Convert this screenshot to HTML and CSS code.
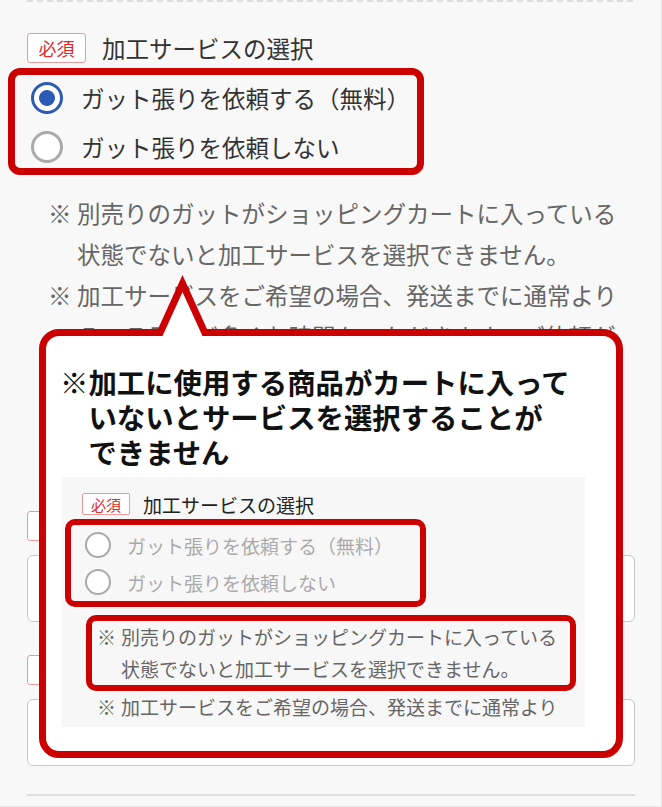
FILE: index.html
```html
<!DOCTYPE html>
<html lang="ja">
<head>
    <meta charset="UTF-8">
    <meta name="viewport" content="width=device-width, initial-scale=1.0">
    <title>加工サービスの選択</title>
    <link rel="stylesheet" href="styles.css">
</head>
<body>
    <div class="screen">
        <div class="divider"></div>

        <section class="field field-service">
            <div class="field-head">
                <span class="badge">必須</span>
                <span class="field-label">加工サービスの選択</span>
            </div>
            <div class="mark-box radios">
                <label class="radio"><span class="dot checked"></span>ガット張りを依頼する（無料）</label>
                <label class="radio"><span class="dot"></span>ガット張りを依頼しない</label>
            </div>
            <ul class="notes">
                <li><span class="kome">※</span><span>別売りのガットがショッピングカートに入っている状態でないと加工サービスを選択できません。</span></li>
                <li><span class="kome">※</span><span>加工サービスをご希望の場合、発送までに通常より５〜７日ほど多くお時間をいただきます。ご依頼が集中した場合は、さらにお時間をいただくことがございます。</span></li>
            </ul>
        </section>

        <section class="field field-input">
            <div class="field-head">
                <span class="badge">必須</span>
                <span class="field-label">ガットの種類</span>
            </div>
            <div class="input-box"></div>
        </section>

        <section class="field field-input field-last">
            <div class="field-head">
                <span class="badge">必須</span>
                <span class="field-label">テンション</span>
            </div>
            <div class="input-box"></div>
        </section>

        <div class="rule"></div>

        <!-- 説明用の吹き出し -->
        <div class="callout">
            <svg class="callout-tail" width="90" height="77" viewBox="0 0 90 77">
                <defs>
                    <clipPath id="tail-clip"><rect x="0" y="0" width="90" height="68"></rect></clipPath>
                </defs>
                <polygon points="18.7,68 42.5,15.5 66.3,68" fill="#fff"></polygon>
                <polyline points="15.5,75 42.5,15.5 69.5,75" fill="none" stroke="#cc0000" stroke-width="7" stroke-linejoin="miter" clip-path="url(#tail-clip)"></polyline>
            </svg>
            <p class="callout-title">※加工に使用する商品がカートに入って<br>いないとサービスを選択することが<br>できません</p>

            <div class="shot">
                <div class="field-head">
                    <span class="badge">必須</span>
                    <span class="field-label">加工サービスの選択</span>
                </div>
                <div class="mark-box radios">
                    <label class="radio"><span class="dot"></span>ガット張りを依頼する（無料）</label>
                    <label class="radio"><span class="dot"></span>ガット張りを依頼しない</label>
                </div>
                <ul class="notes">
                    <li class="mark-box"><span class="kome">※</span><span>別売りのガットがショッピングカートに入っている状態でないと加工サービスを選択できません。</span></li>
                    <li><span class="kome">※</span><span>加工サービスをご希望の場合、発送までに通常より５〜７日ほど多くお時間をいただきます。</span></li>
                </ul>
            </div>
        </div>
    </div>
</body>
</html>
```

FILE: styles.css
```css
body {
    margin: 0;
    background-color: #f8f8f8;
    font-family: "Noto Sans CJK JP", "Noto Sans", sans-serif;
    color: #333;
}
.screen {
    position: relative;
    width: 662px;
    height: 807px;
    box-sizing: border-box;
    padding: 0 26px 0 27px;
    border-right: 1px solid #e6e6e6;
    border-bottom: 1px solid #e6e6e6;
    overflow: hidden;
}
.divider {
    height: 2px;
    background: repeating-linear-gradient(90deg, #dcdcdc 0 6px, transparent 6px 10px);
}

/* フォーム */
.field-service {
    margin-top: 31px;
}
.field-head {
    display: flex;
    align-items: center;
    gap: 16px;
    height: 30px;
}
.badge {
    display: flex;
    align-items: center;
    justify-content: center;
    width: 59px;
    height: 30px;
    box-sizing: border-box;
    border: 1px solid #e79a9a;
    border-radius: 3px;
    background-color: #fff;
    color: #e02a2a;
    font-size: 18px;
}
.field-label {
    font-size: 23.5px;
    color: #333;
}
.mark-box {
    border: 7px solid #cc0000;
    border-radius: 12px;
}
.radios {
    display: flex;
    flex-direction: column;
    gap: 7px;
    width: 416px;
    box-sizing: border-box;
    margin: 5px 0 0 -19px;
    padding: 2px 0 0 16px;
}
.radio {
    display: flex;
    align-items: center;
    gap: 18px;
    height: 42px;
    font-size: 23.5px;
    color: #333;
}
.dot {
    flex: none;
    width: 32px;
    height: 32px;
    box-sizing: border-box;
    border: 3px solid #aaa;
    border-radius: 50%;
    background-color: #fff;
}
.dot.checked {
    border-color: #2b5bb6;
    background: radial-gradient(circle, #2b5bb6 0 7.5px, #fff 8.3px);
}
.notes {
    list-style: none;
    margin: 17.5px 0 0 21px;
    padding: 0;
}
.notes li {
    display: flex;
    font-size: 23.5px;
    line-height: 41px;
    color: #666;
}
.kome {
    flex: none;
    width: 29px;
}
.field-input {
    margin-top: 72px;
}
.field-last {
    margin-top: 33px;
}
.input-box {
    height: 67px;
    margin-top: 14px;
    box-sizing: border-box;
    border: 1px solid #c8c8c8;
    border-radius: 6px;
    background-color: #fff;
}
.rule {
    height: 2px;
    margin-top: 28px;
    background-color: #e0e0e0;
}

/* 吹き出し */
.callout {
    position: absolute;
    left: 39px;
    top: 329px;
    width: 584px;
    height: 429px;
    box-sizing: border-box;
    padding: 28px 0 0 15px;
    border: 7px solid #cc0000;
    border-radius: 20px;
    background-color: #fff;
}
.callout-tail {
    position: absolute;
    left: 94px;
    top: -68px;
}
.callout-title {
    margin: 0 0 0 -1px;
    padding-left: 28.4px;
    text-indent: -28.4px;
    font-size: 28.4px;
    font-weight: bold;
    line-height: 35px;
    color: #111;
}
.shot {
    width: 524px;
    height: 250px;
    margin-top: 8px;
    box-sizing: border-box;
    padding: 16px 0 0 21px;
    background-color: #f7f7f7;
    overflow: hidden;
}
.shot .field-head {
    gap: 13px;
    height: 22px;
}
.shot .badge {
    width: 48px;
    height: 22px;
    border-radius: 2px;
    font-size: 15px;
}
.shot .field-label {
    font-size: 19px;
    color: #222;
}
.shot .mark-box {
    border-width: 6px;
    border-radius: 10px;
}
.shot .radios {
    gap: 3px;
    width: 361px;
    margin: 4px 0 0 -17px;
    padding: 3px 0 2px 14px;
}
.shot .radio {
    gap: 16px;
    height: 34px;
    font-size: 19px;
    color: #aaa;
}
.shot .dot {
    width: 26px;
    height: 26px;
    border-width: 2.5px;
}
.shot .notes {
    width: 490px;
    margin: 8px 0 0 4px;
}
.shot .notes li {
    padding: 0 6px 0 11px;
    font-size: 19px;
    line-height: 32px;
}
.shot .notes li.mark-box {
    padding: 0 0 0 5px;
}
.shot .kome {
    width: 24px;
}
```
